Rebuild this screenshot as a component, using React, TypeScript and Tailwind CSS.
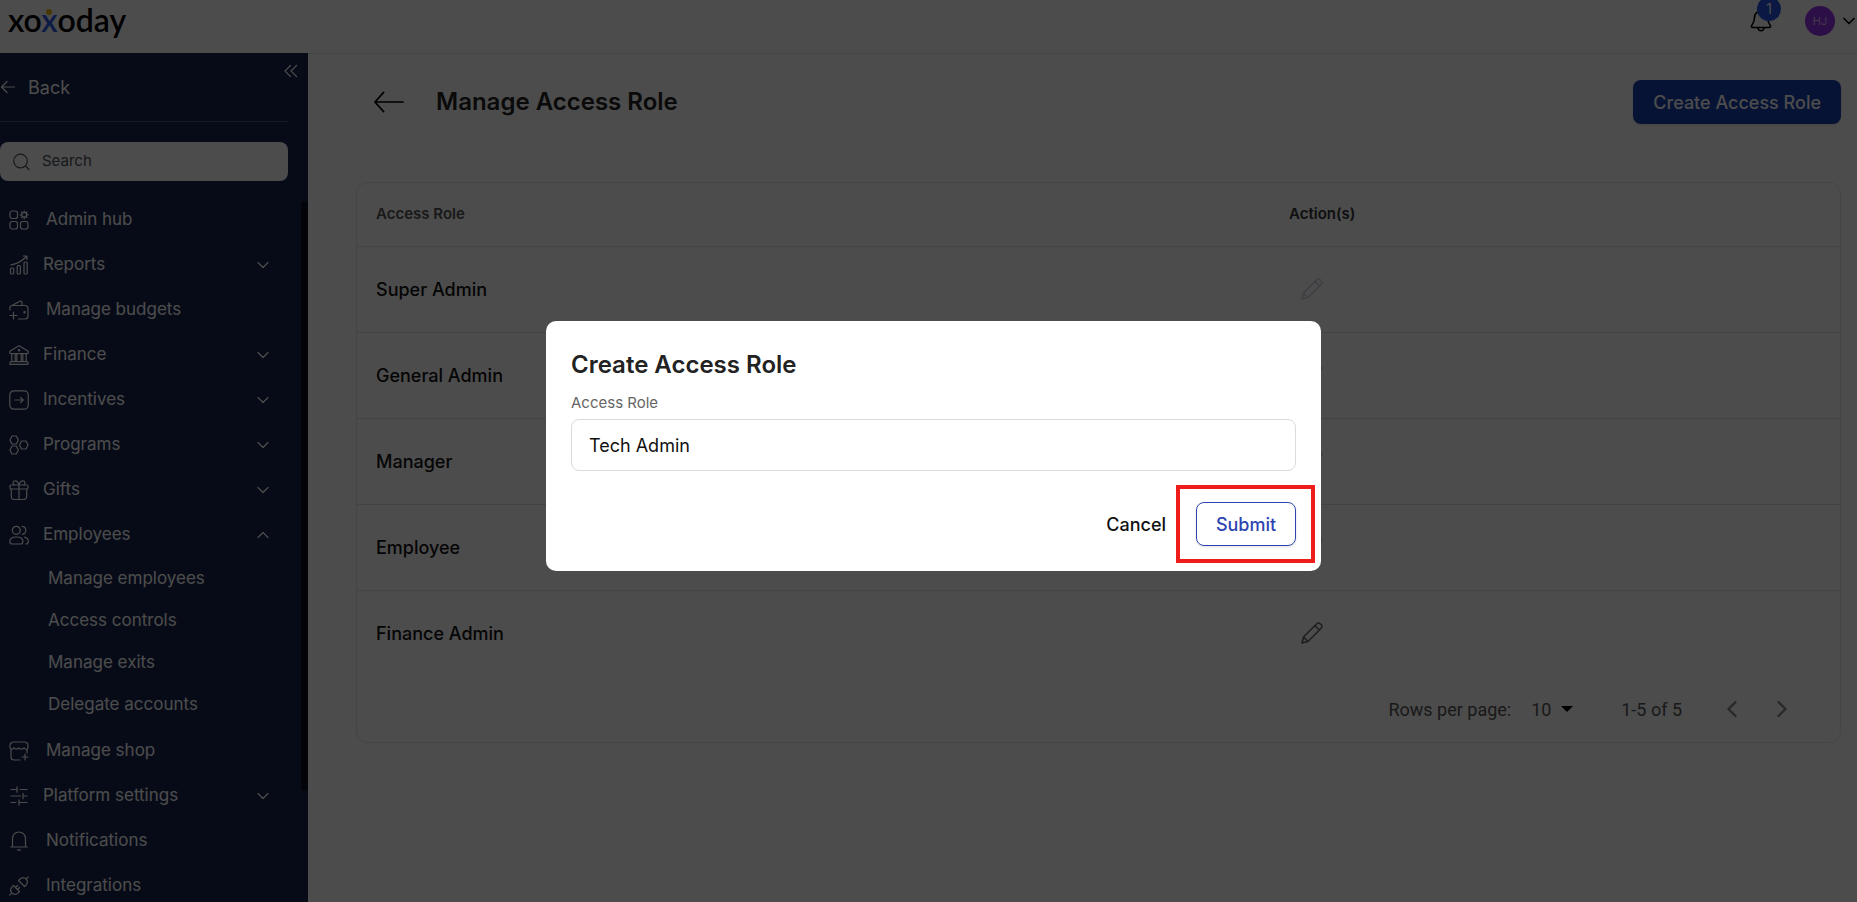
import React, { useState } from 'react';
import { ChevronDown, ChevronLeft, ChevronRight, ChevronUp } from 'lucide-react';

interface NavItem {
  id: string;
  label: string;
  icon: React.ReactNode;
  children?: string[];
  expandable?: boolean;
}

const Icon: React.FC<{ children: React.ReactNode }> = ({ children }) => (
  <svg
    viewBox="0 0 20 20"
    className="h-5 w-5 shrink-0"
    fill="none"
    stroke="currentColor"
    strokeWidth="1.2"
    strokeLinecap="round"
    strokeLinejoin="round"
    aria-hidden="true"
  >
    {children}
  </svg>
);

const navItems: NavItem[] = [
  {
    id: 'hub',
    label: 'Admin hub',
    icon: (
      <Icon>
        <rect x="1" y="1" width="7.5" height="7.5" rx="2.2" />
        <rect x="1" y="11.5" width="7.5" height="7.5" rx="2.2" />
        <rect x="11.5" y="11.5" width="7.5" height="7.5" rx="2.2" />
        <circle cx="15.2" cy="4.8" r="2.4" />
        <path d="M15.2 .8v1.4M15.2 7.4v1.4M11.2 4.8h1.4M17.8 4.8h1.4M12.4 2l1 1M17 6.6l1 1M18 2l-1 1M13.4 6.6l-1 1" />
      </Icon>
    ),
  },
  {
    id: 'reports',
    label: 'Reports',
    expandable: true,
    icon: (
      <Icon>
        <rect x="1.5" y="13" width="3.2" height="6" rx="1" />
        <rect x="8.2" y="10.5" width="3.2" height="8.5" rx="1" />
        <rect x="15" y="7" width="3.2" height="12" rx="1" />
        <path d="M2 9.8C8 9 12.500 6.500 17.500 1.500M14.300 1h3.600v3.500" />
      </Icon>
    ),
  },
  {
    id: 'budgets',
    label: 'Manage budgets',
    icon: (
      <Icon>
        <path d="M1 10V7.500a2 2 0 0 1 2-2h13a3 3 0 0 1 3 3V16a3 3 0 0 1-3 3H9.500M1.500 6.200 11 1.200a1.500 1.500 0 0 1 2 1.300v3M1 15.500h7M4.500 12v7" />
        <circle cx="15.500" cy="12.300" r=".6" />
      </Icon>
    ),
  },
  {
    id: 'finance',
    label: 'Finance',
    expandable: true,
    icon: (
      <Icon>
        <path d="M.8 6.200 9 1.200a2 2 0 0 1 2 0l8.200 5v1.600a.8.8 0 0 1-.8.8H1.600a.8.800 0 0 1-.8-.8zM2.800 8.600v8M6.200 8.600v8M7.800 8.600v8M12.200 8.600v8M13.800 8.600v8M17.200 8.600v8M2.500 16.600h15M1 19.300h18v-1.500a1.200 1.200 0 0 0-1.200-1.200H2.200A1.200 1.200 0 0 0 1 17.800z" />
        <circle cx="10" cy="5.300" r=".7" />
      </Icon>
    ),
  },
  {
    id: 'incentives',
    label: 'Incentives',
    expandable: true,
    icon: (
      <Icon>
        <rect x=".8" y=".8" width="18.400" height="18.400" rx="4" />
        <path d="M6 10h8M11.500 7.300 14.200 10l-2.700 2.700" />
      </Icon>
    ),
  },
  {
    id: 'programs',
    label: 'Programs',
    expandable: true,
    icon: (
      <Icon>
        <path d="M3 1h4.300l2.100 4-2.100 4H3L.9 5zM3 11h4.300l2.100 4-2.100 4H3l-2.100-4zM12.600 6h4.300l2.200 4-2.200 4h-4.300l-2.100-4z" />
      </Icon>
    ),
  },
  {
    id: 'gifts',
    label: 'Gifts',
    expandable: true,
    icon: (
      <Icon>
        <rect x="1" y="5" width="18" height="4" rx="1.200" />
        <path d="M2.300 9v7.500a3 3 0 0 0 3 3h9.400a3 3 0 0 0 3-3V9M10 5v14.500M10 5C9 1.500 7.500.6 6 .8 4 1 3.500 3.500 5 5M10 5c1-3.500 2.500-4.400 4-4.200C16 1 16.500 3.500 15 5" />
      </Icon>
    ),
  },
  {
    id: 'employees',
    label: 'Employees',
    expandable: true,
    children: ['Manage employees', 'Access controls', 'Manage exits', 'Delegate accounts'],
    icon: (
      <Icon>
        <circle cx="7.300" cy="5.300" r="4" />
        <path d="M.8 16.500c0-3 2.500-4.500 6.500-4.500s6.600 1.500 6.600 4.500c0 1.700-.9 2.500-2.400 2.500H3.200c-1.500 0-2.400-.8-2.400-2.500zM13 1.300c2.300.2 3.800 1.800 3.800 4s-1.500 3.800-3.500 4M15.500 12.200c2.400.5 3.800 2 3.800 4.300 0 1.700-.8 2.500-2.300 2.500" />
      </Icon>
    ),
  },
  {
    id: 'shop',
    label: 'Manage shop',
    icon: (
      <Icon>
        <path d="M2 8.500V16a3 3 0 0 0 3 3h6M18 8.500V12M4.500 1h11A3.500 3.500 0 0 1 19 4.500v2c0 2.200-3 2.300-4 .3-.8 1.800-4.200 1.800-5 0-.8 1.800-4.200 1.800-5 0-1 2-4 1.900-4-.3v-2A3.500 3.500 0 0 1 4.500 1zM13 16h6M16 13v6" />
      </Icon>
    ),
  },
  {
    id: 'platform',
    label: 'Platform settings',
    expandable: true,
    icon: (
      <Icon>
        <path d="M2 3.500h6M8 .8v5.400M11 3.500h7M2 10h9.500M14 10h4M14 7.300v5.400M2 16.500h5M10 16.500h8M10 13.800v5.400" />
      </Icon>
    ),
  },
  {
    id: 'notifications',
    label: 'Notifications',
    icon: (
      <Icon>
        <path d="M1.800 16h16.400M3.500 16V7.500a6.500 6.500 0 0 1 13 0V16M8.500 18.800c.8.600 2.200.6 3 0" />
      </Icon>
    ),
  },
  {
    id: 'integrations',
    label: 'Integrations',
    icon: (
      <Icon>
        <path d="m.8 19.200 2-2M19.200.8l-2 2M4.500 9.500l6 6-1.500 1.600c-1.700 1.700-4.300 1.700-6 0s-1.600-4.200 0-6zM9.500 4.500l6 6L17.100 9c1.700-1.700 1.700-4.300 0-6s-4.200-1.600-6 0zM6.500 11.500l2-2M8.500 13.500l2-2" />
      </Icon>
    ),
  },
];

const roles = [
  { name: 'Super Admin', editable: false },
  { name: 'General Admin', editable: false },
  { name: 'Manager', editable: false },
  { name: 'Employee', editable: false },
  { name: 'Finance Admin', editable: true },
];

const Header: React.FC = () => (
  <header className="flex h-[53px] shrink-0 items-start justify-between bg-white pl-2">
    <a href="#home" aria-label="xoxoday" className="font-['Lato',sans-serif] text-[32px] leading-[39px] font-semibold text-black">
      xo<span className="relative text-[#2f5be8]">x<span className="absolute top-[9px] left-1/2 h-1.5 w-1.5 -translate-x-1/2 rounded-full bg-[#f5b70a]"></span></span>oday
    </a>
    <div className="flex h-[42px] items-center">
      <button aria-label="Notifications" className="relative mr-8 h-6 w-6 text-black">
        <svg viewBox="0 0 24 24" className="h-6 w-6" fill="none" stroke="currentColor" strokeWidth="1.600" strokeLinecap="round" strokeLinejoin="round">
          <path d="M5.500 8.500a6.500 6.500 0 0 1 13 0c0 4.500 1.500 6 2.700 7.800.8 1.200.2 2.200-1 2.200H3.800c-1.200 0-1.800-1-1-2.200 1.200-1.800 2.700-3.300 2.700-7.800zM8.800 18.500c.3 2.200 1.700 3.300 3.200 3.300s2.900-1.100 3.200-3.300" />
        </svg>
        <span className="absolute -top-3 left-2 flex h-6 w-6 items-center justify-center rounded-full bg-[#2350e0] text-sm text-white">1</span>
      </button>
      <button className="-mr-0.5 flex items-center gap-1" aria-label="Account">
        <span className="flex h-[30px] w-[30px] items-center justify-center rounded-full bg-[#9333ea] text-[11px] text-white/70">HJ</span>
        <ChevronDown className="h-5 w-5" strokeWidth={2} />
      </button>
    </div>
  </header>
);

const Sidebar: React.FC = () => (
  <aside className="flex w-[308px] shrink-0 flex-col bg-[#17254f] text-white">
    <div className="mr-5 flex h-[69px] shrink-0 items-center border-b border-white/20">
      <a href="#back" className="flex flex-1 items-center gap-3 text-[18px]">
        <svg viewBox="0 0 16 16" className="h-4 w-4" fill="none" stroke="currentColor" strokeWidth="1.200" strokeLinecap="round" strokeLinejoin="round">
          <path d="M14.500 8H1.500M7 2.500 1.500 8 7 13.500" />
        </svg>
        Back
      </a>
      <button aria-label="Collapse menu" className="-mr-2.5 mb-8">
        <svg viewBox="0 0 14 14" className="h-3.5 w-3.5" fill="none" stroke="currentColor" strokeWidth="1.200" strokeLinecap="round" strokeLinejoin="round">
          <path d="M6.500 1.500 1 7l5.500 5.500M12.500 1.500 7 7l5.500 5.500" />
        </svg>
      </button>
    </div>

    <label className="mt-5 mr-5 flex h-[39px] shrink-0 items-center gap-3 rounded-lg bg-white pl-3 text-[#4b5563]">
      <svg viewBox="0 0 18 18" className="h-[18px] w-[18px]" fill="none" stroke="currentColor" strokeWidth="1.200" strokeLinecap="round">
        <circle cx="8.500" cy="8" r="6.800" />
        <path d="m13.500 13 3.500 3.500" />
      </svg>
      <input type="search" aria-label="Search" placeholder="Search" className="min-w-0 flex-1 bg-transparent text-[15px] outline-none placeholder:text-[#4b5563]" />
    </label>

    <div className="mt-4 flex min-h-0 flex-1 items-start">
      <nav className="h-full flex-1 overflow-hidden text-[17px]">
        {navItems.map((item) => (
          <div key={item.id}>
            <button className={`flex h-[45px] w-full items-center pr-7 pl-[9px] text-left ${item.expandable ? 'gap-3.5' : 'gap-[17px]'}`}>
              {item.icon}
              <span className="flex-1">{item.label}</span>
              {item.expandable && (item.children
                ? <ChevronUp className="h-5 w-5" strokeWidth={1.5} />
                : <ChevronDown className="h-5 w-5" strokeWidth={1.5} />)}
            </button>
            {item.children && (
              <ul className="pt-px pb-0.5 pl-12">
                {item.children.map((child) => (
                  <li key={child} className="flex h-[42px] items-center">
                    <a href="#employees">{child}</a>
                  </li>
                ))}
              </ul>
            )}
          </div>
        ))}
      </nav>
      <div className="mt-1 h-[590px] w-[7px] rounded-full bg-black/60"></div>
    </div>
  </aside>
);

const PencilIcon: React.FC = () => (
  <svg viewBox="0 0 22 22" className="h-[22px] w-[22px]" fill="none" stroke="currentColor" strokeWidth="1.600" strokeLinecap="round" strokeLinejoin="round">
    <path d="M1 21l1.500-6L15.800 1.800a2.400 2.400 0 0 1 3.400 0l1 1a2.400 2.400 0 0 1 0 3.400L7 19.500zM14 3.700l4.300 4.300M2.500 15l4.500 4.500" />
  </svg>
);

const RolesTable: React.FC = () => (
  <section className="rounded-xl border border-[#e5e7eb]">
    <table className="w-full table-fixed text-left">
      <thead>
        <tr className="h-[63px] border-b border-[#e0e0e0] text-[15px]">
          <th className="w-[61.5%] pl-[19px] font-semibold text-[#555]">Access Role</th>
          <th className="pl-5 font-semibold text-[#333]">Action(s)</th>
        </tr>
      </thead>
      <tbody>
        {roles.map((role) => (
          <tr key={role.name} className="h-[86px] border-b border-[#e0e0e0] last:border-b-0">
            <td className="pl-[19px] text-[18px] font-medium text-[#111]">{role.name}</td>
            <td className="pl-8">
              <button
                aria-label={`Edit ${role.name}`}
                disabled={!role.editable}
                className={`block ${role.editable ? 'text-[#666]' : 'text-[#d0d2e2]'}`}
              >
                <PencilIcon />
              </button>
            </td>
          </tr>
        ))}
      </tbody>
    </table>
    <div className="flex h-[66px] items-center justify-end pr-11 font-['Roboto',sans-serif] text-[18px] text-[#555]">
      <label htmlFor="rows">Rows per page:</label>
      <div className="relative ml-5 flex items-center">
        <select id="rows" className="w-[42px] appearance-none bg-transparent outline-none">
          <option>10</option>
        </select>
        <svg viewBox="0 0 12 6" className="pointer-events-none absolute right-0 h-1.5 w-3" fill="black">
          <path d="M0 0h12L6 6z" />
        </svg>
      </div>
      <span className="ml-12">1-5 of 5</span>
      <button aria-label="Previous page" className="ml-9 text-[#888]"><ChevronLeft className="h-7 w-7" strokeWidth={2} /></button>
      <button aria-label="Next page" className="ml-[22px] text-[#888]"><ChevronRight className="h-7 w-7" strokeWidth={2} /></button>
    </div>
  </section>
);

const CreateRoleDialog: React.FC = () => {
  const [role, setRole] = useState('Tech Admin');

  return (
    <div className="fixed inset-0 flex items-center justify-center bg-black/70 pb-2.5 pl-2.5">
      <form
        role="dialog"
        aria-labelledby="dialog-title"
        className="w-[775px] rounded-[10px] bg-white px-[25px] pt-7 pb-[25px]"
        onSubmit={(e) => e.preventDefault()}
      >
        <h2 id="dialog-title" className="text-[24px] leading-8 font-semibold text-[#222]">Create Access Role</h2>
        <label htmlFor="role" className="mt-3 block text-[15px] leading-5 text-[#666]">Access Role</label>
        <input
          id="role"
          value={role}
          onChange={(e) => setRole(e.target.value)}
          className="mt-1.5 block h-[52px] w-full rounded-lg border border-[#d9dbdf] px-[17px] text-[18px] text-[#111] outline-none"
        />
        <div className="mt-[31px] flex items-center justify-end gap-[30px] text-[18px] font-medium">
          <button type="button" className="text-[#111]">Cancel</button>
          <div className="relative">
            <button type="submit" className="h-11 w-[100px] rounded-lg border border-[#2d45b0] text-[#2d45b0] shadow-sm">Submit</button>
            <span className="pointer-events-none absolute -top-[17px] -right-[19px] -bottom-[17px] -left-5 border-4 border-[#ef1c1c]"></span>
          </div>
        </div>
      </form>
    </div>
  );
};

const App: React.FC = () => (
  <div className="flex h-screen flex-col overflow-hidden bg-white font-['Inter',sans-serif]">
    <Header />
    <div className="flex min-h-0 flex-1">
      <Sidebar />
      <main className="flex-1 border-t border-[#e5e7eb] pt-[26px] pr-4 pl-12">
        <div className="mb-[58px] flex items-center justify-between">
          <div className="flex items-center gap-8 pl-[17px]">
            <button aria-label="Go back">
              <svg viewBox="0 0 32 24" className="h-6 w-[31px]" fill="none" stroke="black" strokeWidth="1.800" strokeLinecap="round" strokeLinejoin="round">
                <path d="M31 12H2M11 2 2 12l9 10" />
              </svg>
            </button>
            <h1 className="text-[24px] font-semibold text-[#222]">Manage Access Role</h1>
          </div>
          <button className="h-11 rounded-lg bg-[#1640b0] px-5 text-[18px] font-medium text-white shadow-sm">Create Access Role</button>
        </div>
        <RolesTable />
      </main>
    </div>
    <CreateRoleDialog />
  </div>
);

export default App;
